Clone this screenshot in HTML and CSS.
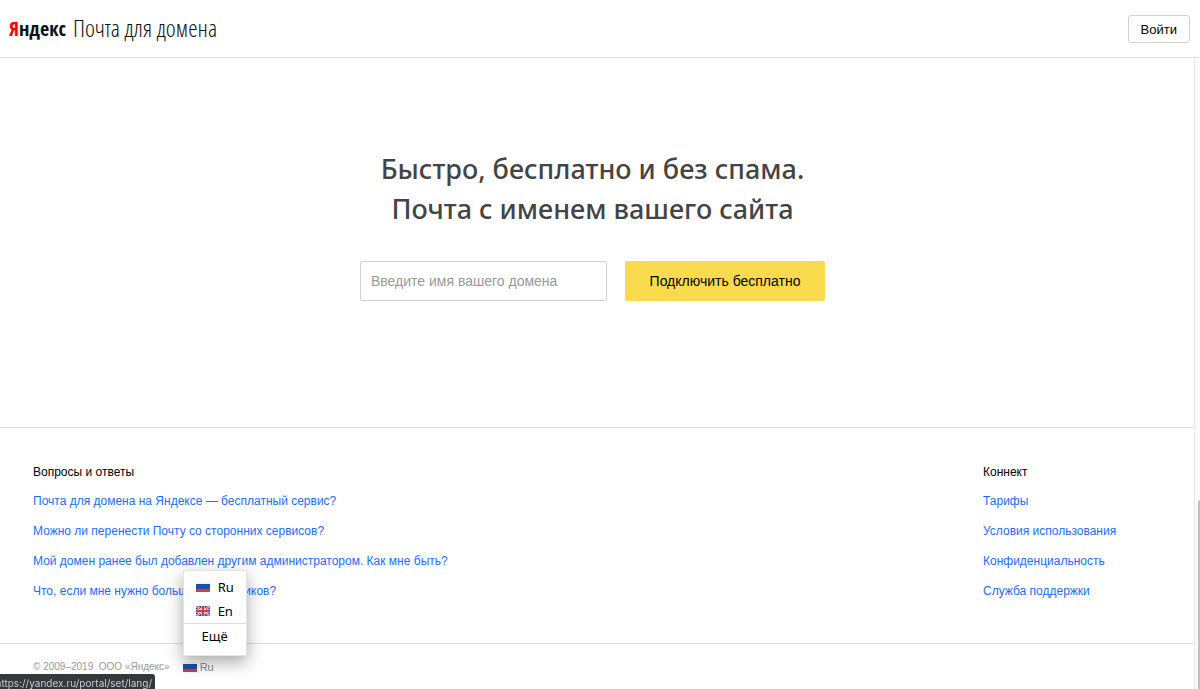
FILE: index.html
```
<!DOCTYPE html>
<html lang="ru">
<head>
    <meta charset="UTF-8">
    <meta name="viewport" content="width=device-width, initial-scale=1.0">
    <title>Яндекс Почта для домена</title>
    <link rel="stylesheet" href="styles.css">
</head>
<body>
    <header class="header">
        <a class="logo" href="#"><span class="logo-brand"><span class="logo-red">Я</span>ндекс</span> <span class="logo-service">Почта для домена</span></a>
        <button class="login-button" type="button">Войти</button>
    </header>
    <div class="page">
        <div class="content">
            <main class="hero">
                <h1>Быстро, бесплатно и без спама.<br>Почта с именем вашего сайта</h1>
                <form class="domain-form">
                    <input type="text" id="domain" placeholder="Введите имя вашего домена" aria-label="Введите имя вашего домена">
                    <button type="button">Подключить бесплатно</button>
                </form>
            </main>
            <section class="links">
                <div class="links-faq">
                    <h2>Вопросы и ответы</h2>
                    <ul>
                        <li><a href="#">Почта для домена на Яндексе — бесплатный сервис?</a></li>
                        <li><a href="#">Можно ли перенести Почту со сторонних сервисов?</a></li>
                        <li><a href="#">Мой домен ранее был добавлен другим администратором. Как мне быть?</a></li>
                        <li><a href="#">Что, если мне нужно больше 1000 ящиков?</a></li>
                    </ul>
                </div>
                <div class="links-connect">
                    <h2>Коннект</h2>
                    <ul>
                        <li><a href="#">Тарифы</a></li>
                        <li><a href="#">Условия использования</a></li>
                        <li><a href="#">Конфиденциальность</a></li>
                        <li><a href="#">Служба поддержки</a></li>
                    </ul>
                </div>
            </section>
            <footer class="footer">
                <span>© 2009–2019&nbsp; ООО «Яндекс»</span>
                <div class="lang">
                    <button class="lang-current" type="button">
                        <svg class="flag" viewBox="0 0 14 10"><path fill="#f4f4f4" d="M0 0h14v3H0z"/><path fill="#1c4fa8" d="M0 2h14v5H0z"/><path fill="#e4353b" d="M0 7h14v3H0z"/></svg>
                        Ru
                    </button>
                    <div class="lang-menu">
                        <a href="#">
                            <svg class="flag" viewBox="0 0 14 10"><path fill="#f4f4f4" d="M0 0h14v3H0z"/><path fill="#1c4fa8" d="M0 2h14v5H0z"/><path fill="#e4353b" d="M0 7h14v3H0z"/></svg>
                            Ru
                        </a>
                        <a href="#">
                            <svg class="flag" viewBox="0 0 28 20">
                                <path fill="#2b4a9b" d="M0 0h28v20H0z"/>
                                <path stroke="#fff" stroke-width="4" d="M0 0l28 20M28 0L0 20"/>
                                <path stroke="#e4353b" stroke-width="2" d="M0 0l28 20M28 0L0 20"/>
                                <path stroke="#fff" stroke-width="6" d="M14 0v20M0 10h28"/>
                                <path stroke="#e4353b" stroke-width="4" d="M14 0v20M0 10h28"/>
                            </svg>
                            En
                        </a>
                        <a class="lang-more" href="#">Ещё</a>
                    </div>
                </div>
            </footer>
        </div>
        <div class="scrollbar"><div class="scrollbar-thumb"></div></div>
    </div>
    <div class="status"><span>https://yandex.ru/portal/set/lang/</span></div>
</body>
</html>
```
FILE: styles.css
```
* {
    box-sizing: border-box;
}

body {
    margin: 0;
    height: 100vh;
    display: flex;
    flex-direction: column;
    overflow: hidden;
    background: #fff;
    color: #000;
    font-family: "Liberation Sans", Arial, sans-serif;
    font-size: 12px;
    line-height: 16px;
}

button,
input {
    font-family: inherit;
}

a {
    color: #1a6dff;
    text-decoration: none;
}

.header {
    display: flex;
    align-items: center;
    justify-content: space-between;
    padding: 15px 10px 14px 9px;
    border-bottom: 1px solid #e4e4e4;
}

.logo {
    display: flex;
    gap: 7px;
    color: #111;
    font-family: "Open Sans Condensed", "Liberation Sans Narrow", "Open Sans", sans-serif;
    font-size: 20px;
    line-height: 28px;
    white-space: nowrap;
}

.logo-brand {
    font-weight: 700;
}

.logo-service {
    font-family: "Open Sans Condensed Light", "Liberation Sans Narrow", "Open Sans", sans-serif;
    font-size: 24px;
    font-weight: 300;
    line-height: 26px;
}

.logo-red {
    color: #f00;
}

.login-button {
    height: 28px;
    padding: 0 12px;
    border: 1px solid #d0d0d0;
    border-radius: 3px;
    background: #fff;
    color: #000;
    font-size: 13px;
}

.page {
    flex: 1;
    display: flex;
    min-height: 0;
}

.content {
    flex: 1;
    display: flex;
    flex-direction: column;
}

.scrollbar {
    width: 6px;
    display: flex;
    flex-direction: column;
    align-items: flex-end;
    justify-content: flex-end;
    border-left: 1px solid #e8e8e8;
    background: #fafafa;
}

.scrollbar-thumb {
    width: 2px;
    height: 30%;
    border-radius: 2px 0 0 0;
    background: #c1c1c1;
}

.hero {
    flex: 1;
    padding: 91px 9px 0 0;
    border-bottom: 1px solid #ddd;
    text-align: center;
}

h1 {
    margin: 0 0 32px;
    color: #444;
    font-family: "Noto Sans", sans-serif;
    font-size: 27px;
    font-weight: 500;
    line-height: 40px;
}

.domain-form {
    display: flex;
    justify-content: center;
    gap: 18px;
}

.domain-form input {
    width: 247px;
    height: 40px;
    padding: 0 10px;
    border: 1px solid #d0d0d0;
    border-radius: 2px;
    font-size: 14px;
}

.domain-form input::placeholder {
    color: #999;
}

.domain-form button {
    width: 200px;
    height: 40px;
    padding: 0;
    border: none;
    border-radius: 2px;
    background: #fadb4e;
    color: #000;
    font-size: 14px;
}

.links {
    display: flex;
    justify-content: space-between;
    padding: 36px 33px 44px;
    border-bottom: 1px solid #ddd;
}

.links-connect {
    width: 178px;
}

h2 {
    margin: 0 0 13px;
    font-size: 12px;
    font-weight: 400;
}

ul {
    display: flex;
    flex-direction: column;
    gap: 14px;
    margin: 0;
    padding: 0;
    list-style: none;
}

.footer {
    display: flex;
    align-items: center;
    gap: 13px;
    padding: 15px 33px 14px;
    color: #999;
    font-size: 10px;
}

.flag {
    width: 14px;
    height: 10px;
}

.lang {
    position: relative;
}

.lang-current {
    display: flex;
    align-items: center;
    gap: 3px;
    padding: 0;
    border: none;
    background: none;
    color: #7b84a0;
    font-size: 11px;
    line-height: 16px;
}

.lang-menu {
    position: absolute;
    left: 0;
    bottom: 19px;
    width: 64px;
    padding: 4px 0 7px;
    background: #fff;
    border: 1px solid #e4e4e4;
    box-shadow: 0 6px 16px rgba(0, 0, 0, 0.35);
}

.lang-menu a {
    display: flex;
    align-items: center;
    gap: 8px;
    padding-left: 12px;
    color: #000;
    font-family: "Noto Sans", sans-serif;
    font-size: 13px;
    line-height: 24px;
}

.lang-menu .lang-more {
    justify-content: center;
    padding: 0;
    border-top: 1px solid #ddd;
}

.status {
    position: fixed;
    left: 0;
    bottom: 0;
    width: 155px;
    height: 15px;
    display: flex;
    justify-content: flex-end;
    padding-right: 3px;
    overflow: hidden;
    border-radius: 0 3px 0 0;
    background: #35373a;
    color: #c8cacc;
    font-family: Inter, sans-serif;
    font-size: 10px;
    line-height: 18px;
    white-space: nowrap;
}
```
